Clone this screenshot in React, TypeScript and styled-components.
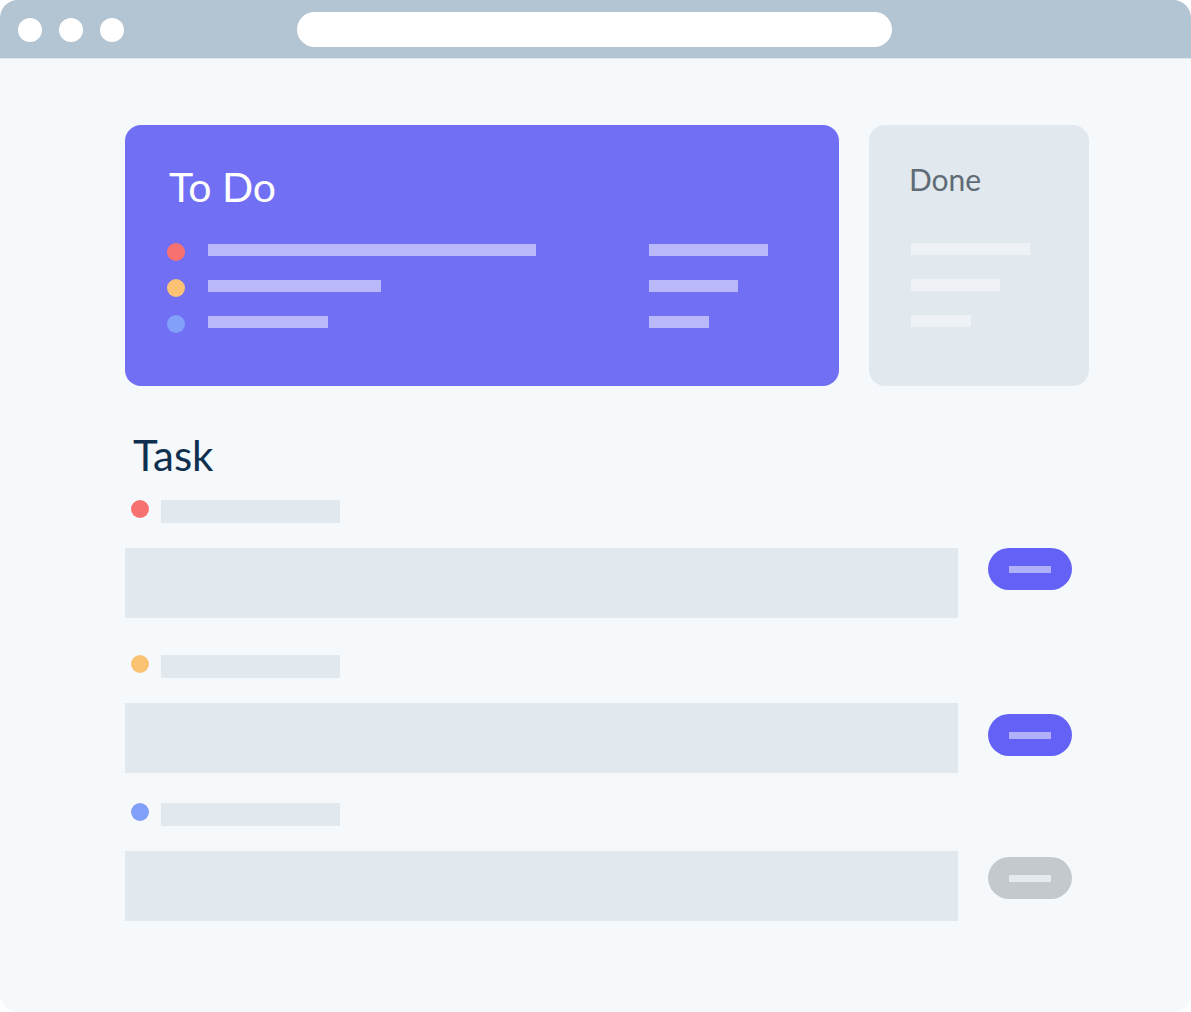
import React from "react";
import styled, { createGlobalStyle } from "styled-components";

const Global = createGlobalStyle`
  html, body { margin: 0; padding: 0; background: #ffffff; }
  body { font-family: Lato, "Open Sans", sans-serif; }
`;

const Window = styled.div`
  width: 1191px;
  height: 1012px;
  border-radius: 18px;
  overflow: hidden;
  background: #f5f9fc;
  display: flex;
  flex-direction: column;
`;

const TitleBar = styled.div`
  height: 59px;
  flex: none;
  background: #b3c4d2;
  border-bottom: 1px solid #dfe7ee;
  display: flex;
  align-items: center;
  padding-left: 18px;
  box-sizing: border-box;
`;

const Dots = styled.div`
  display: flex;
  gap: 17px;
  margin-top: 1px;
`;

const WinDot = styled.span`
  width: 24px;
  height: 24px;
  border-radius: 50%;
  background: #ffffff;
`;

const AddressBar = styled.div`
  width: 595px;
  height: 35px;
  border-radius: 18px;
  background: #ffffff;
  margin-left: 173px;
`;

const Content = styled.div`
  padding: 66px 0 0 125px;
  display: flex;
  flex-direction: column;
`;

const Cards = styled.div`
  display: flex;
  gap: 30px;
`;

const TodoCard = styled.div`
  width: 714px;
  height: 261px;
  border-radius: 16px;
  background: #7170f5;
  box-sizing: border-box;
  padding: 37px 0 0 44px;
`;

const DoneCard = styled.div`
  width: 220px;
  height: 261px;
  border-radius: 16px;
  background: #e1e8ee;
  box-sizing: border-box;
  padding: 36px 0 0 40px;
`;

const TodoTitle = styled.h2`
  margin: 0;
  font-family: Lato, sans-serif;
  font-weight: 400;
  font-size: 41px;
  line-height: 50px;
  color: #ffffff;
`;

const DoneTitle = styled.h2`
  margin: 0;
  font-family: Lato, sans-serif;
  font-weight: 400;
  font-size: 30px;
  line-height: 36px;
  color: #5f6b75;
`;

const TodoList = styled.div`
  margin-top: 32px;
  display: flex;
  flex-direction: column;
  gap: 24px;
`;

const TodoRow = styled.div`
  display: flex;
  align-items: center;
  height: 12px;
`;

const TodoBullet = styled.span<{ $c: string }>`
  width: 18px;
  height: 18px;
  margin: 4px 0 0 -2px;
  border-radius: 50%;
  background: ${(p) => p.$c};
  flex: none;
`;

const Bullet = styled.span<{ $c: string }>`
  width: 18px;
  height: 18px;
  border-radius: 50%;
  background: ${(p) => p.$c};
  flex: none;
`;

const Bar = styled.span<{ $w: number; $c: string }>`
  display: block;
  width: ${(p) => p.$w}px;
  height: 12px;
  background: ${(p) => p.$c};
  flex: none;
`;

const LeftCell = styled.div`
  width: 441px;
  margin-left: 23px;
  flex: none;
`;

const DoneList = styled.div`
  margin-top: 46px;
  margin-left: 2px;
  display: flex;
  flex-direction: column;
  gap: 24px;
`;

const TaskTitle = styled.h1`
  margin: 45px 0 0 8px;
  font-family: Lato, sans-serif;
  font-weight: 400;
  font-size: 42px;
  line-height: 48px;
  color: #0f2f4f;
`;

const TaskList = styled.div`
  display: flex;
  flex-direction: column;
`;

const TaskItem = styled.div<{ $top: number }>`
  margin-top: ${(p) => p.$top}px;
  display: flex;
  flex-direction: column;
`;

const TaskHead = styled.div`
  display: flex;
  align-items: flex-start;
  gap: 12px;
  padding-left: 6px;
  height: 23px;
`;

const Label = styled.span`
  width: 179px;
  height: 23px;
  background: #e1e8ee;
`;

const TaskBody = styled.div`
  margin-top: 25px;
  display: flex;
  align-items: flex-start;
  gap: 30px;
`;

const Field = styled.div`
  width: 833px;
  height: 70px;
  background: #e1e8ee;
`;

const Pill = styled.button<{ $bg: string; $line: string; $mt: number }>`
  margin-top: ${(p) => p.$mt}px;
  width: 84px;
  height: 42px;
  border-radius: 21px;
  border: none;
  padding: 0;
  background: ${(p) => p.$bg};
  display: flex;
  align-items: center;
  justify-content: center;
  &::after {
    content: "";
    width: 42px;
    height: 7px;
    background: ${(p) => p.$line};
  }
`;

const RED = "#f87171";
const ORANGE = "#fbc274";
const BLUE = "#83a0f8";
const LIGHT = "#b8b8fa";
const PALE = "#eef2f6";

const todos = [
  { c: RED, l: 328, r: 119 },
  { c: ORANGE, l: 173, r: 89 },
  { c: BLUE, l: 120, r: 60 },
];

const tasks = [
  { c: RED, top: 21, mt: 0, bg: "#6461f7", line: "#b0b0fb" },
  { c: ORANGE, top: 37, mt: 11, bg: "#6461f7", line: "#b0b0fb" },
  { c: BLUE, top: 30, mt: 6, bg: "#c3c9cd", line: "#e6eaec" },
];

export default function App() {
  return (
    <>
      <Global />
      <Window>
        <TitleBar>
          <Dots>
            <WinDot />
            <WinDot />
            <WinDot />
          </Dots>
          <AddressBar />
        </TitleBar>
        <Content>
          <Cards>
            <TodoCard>
              <TodoTitle>To Do</TodoTitle>
              <TodoList>
                {todos.map((t, i) => (
                  <TodoRow key={i}>
                    <TodoBullet $c={t.c} />
                    <LeftCell>
                      <Bar $w={t.l} $c={LIGHT} />
                    </LeftCell>
                    <Bar $w={t.r} $c={LIGHT} />
                  </TodoRow>
                ))}
              </TodoList>
            </TodoCard>
            <DoneCard>
              <DoneTitle>Done</DoneTitle>
              <DoneList>
                <Bar $w={119} $c={PALE} />
                <Bar $w={89} $c={PALE} />
                <Bar $w={60} $c={PALE} />
              </DoneList>
            </DoneCard>
          </Cards>
          <TaskTitle>Task</TaskTitle>
          <TaskList>
            {tasks.map((t, i) => (
              <TaskItem key={i} $top={t.top}>
                <TaskHead>
                  <Bullet $c={t.c} />
                  <Label />
                </TaskHead>
                <TaskBody>
                  <Field />
                  <Pill $bg={t.bg} $line={t.line} $mt={t.mt} aria-label="action" />
                </TaskBody>
              </TaskItem>
            ))}
          </TaskList>
        </Content>
      </Window>
    </>
  );
}
